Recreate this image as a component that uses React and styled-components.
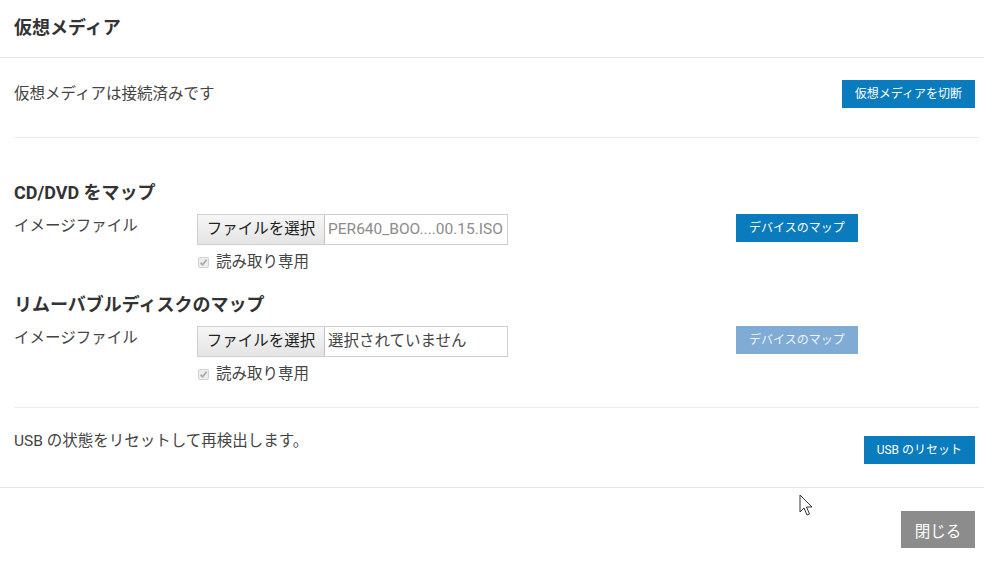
import React from "react";
import styled, { createGlobalStyle } from "styled-components";

const Global = createGlobalStyle`
  html, body { margin: 0; padding: 0; background: #fff; }
  body {
    font-family: "Roboto", "Noto Sans CJK JP", sans-serif;
    color: #444;
    -webkit-font-smoothing: antialiased;
  }
`;

const Modal = styled.div`
  position: relative;
  width: 984px;
  height: 567px;
  background: #fff;
`;

const Header = styled.div`
  display: flex;
  align-items: center;
  padding: 0 14px 1px;
  box-sizing: border-box;
  border-bottom: 1px solid #e6e6e6;
  height: 58px;
`;

const Title = styled.h1`
  margin: 0;
  font-size: 18px;
  font-weight: 700;
  color: #333;
  line-height: 24px;
`;

const Body = styled.div`
  padding: 0 5px 0 14px;
`;

const Row = styled.div`
  display: flex;
  justify-content: space-between;
  align-items: ${(p) => (p.$top ? "flex-start" : "center")};
  padding: ${(p) => p.$pad};
  padding-right: 4px;
  border-bottom: ${(p) => (p.$noBorder ? "none" : "1px solid #ebebeb")};
`;

const Text = styled.div`
  font-size: 15.5px;
  line-height: 20px;
  color: #444;
`;

const PrimaryButton = styled.button`
  height: 28px;
  padding: 0 13px;
  border: none;
  border-radius: 0;
  background: ${(p) => (p.disabled ? "#7fabd5" : "#0a7bbc")};
  color: ${(p) => (p.disabled ? "#eef4fa" : "#fff")};
  font-family: inherit;
  font-size: 12px;
  line-height: 28px;
  white-space: nowrap;
  margin-top: ${(p) => p.$mt || "0"};
  cursor: pointer;
`;

const Section = styled.div`
  margin-top: ${(p) => p.$mt};
`;

const SectionTitle = styled.h2`
  margin: 0;
  font-size: 18px;
  font-weight: 700;
  line-height: 26px;
  color: #333;
`;

const FieldGrid = styled.div`
  display: grid;
  grid-template-columns: 183px 539px auto;
  margin-top: 8px;
`;

const Label = styled.div`
  font-size: 15.5px;
  line-height: 20px;
  padding-top: 2px;
  color: #444;
`;

const FileBox = styled.div`
  display: flex;
  align-items: stretch;
  width: 311px;
  height: 31px;
  box-sizing: border-box;
  border: 1px solid #cfcfcf;
`;

const FileButton = styled.div`
  width: 127px;
  box-sizing: border-box;
  background: linear-gradient(#f6f6f6, #e4e4e4);
  border-right: 1px solid #c4c4c4;
  font-size: 15.5px;
  line-height: 29px;
  color: #222;
  text-align: center;
`;

const FileName = styled.div`
  flex: 1;
  padding-left: 3px;
  font-size: 15.5px;
  line-height: 29px;
  white-space: nowrap;
  overflow: hidden;
  color: ${(p) => (p.$muted ? "#8c8c8c" : "#444")};
`;

const CheckRow = styled.div`
  display: flex;
  align-items: center;
  margin-top: 7px;
  font-size: 15.5px;
  line-height: 20px;
  color: #444;
`;

const CheckBox = styled.span`
  width: 11px;
  height: 11px;
  margin-left: 1px;
  margin-right: 7px;
  box-sizing: border-box;
  border: 1px solid #d2d2d2;
  border-radius: 2px;
  background: #eeeeee;
  display: inline-flex;
  align-items: center;
  justify-content: center;
`;

const Divided = styled.div`
  padding-bottom: 23px;
  border-bottom: 1px solid #ebebeb;
`;

const Footer = styled.div`
  border-top: 1px solid #e6e6e6;
  display: flex;
  justify-content: flex-end;
  padding: 23px 9px 0 0;
`;

const CloseButton = styled.button`
  width: 74px;
  height: 37px;
  border: none;
  border-radius: 0;
  background: #8c8c8c;
  color: #fff;
  font-family: inherit;
  font-size: 15.5px;
  cursor: pointer;
`;

const Cursor = styled.svg`
  position: absolute;
  left: 799px;
  top: 494px;
`;

function ReadOnly() {
  return (
    <CheckRow>
      <CheckBox>
        <svg width="9" height="9" viewBox="0 0 9 9">
          <path d="M1.5 4.8 L3.6 6.8 L7.6 1.8" fill="none" stroke="#a6a6a6" strokeWidth="1.6" />
        </svg>
      </CheckBox>
      読み取り専用
    </CheckRow>
  );
}

function MapSection({ title, file, muted, disabled, mt }) {
  return (
    <Section $mt={mt}>
      <SectionTitle>{title}</SectionTitle>
      <FieldGrid>
        <Label>イメージファイル</Label>
        <div>
          <FileBox>
            <FileButton>ファイルを選択</FileButton>
            <FileName $muted={muted}>{file}</FileName>
          </FileBox>
          <ReadOnly />
        </div>
        <div>
          <PrimaryButton disabled={disabled}>デバイスのマップ</PrimaryButton>
        </div>
      </FieldGrid>
    </Section>
  );
}

export default function App() {
  return (
    <>
      <Global />
      <Modal>
        <Header>
          <Title>仮想メディア</Title>
        </Header>
        <Body>
          <Row $pad="22px 0 29px">
            <Text>仮想メディアは接続済みです</Text>
            <PrimaryButton>仮想メディアを切断</PrimaryButton>
          </Row>
          <MapSection mt="42px" title="CD/DVD をマップ" file="PER640_BOO....00.15.ISO" muted />
          <Divided>
            <MapSection mt="20px" title="リムーバブルディスクのマップ" file="選択されていません" disabled />
          </Divided>
          <Row $top $noBorder $pad="23px 0 23px">
            <Text>USB の状態をリセットして再検出します。</Text>
            <PrimaryButton $mt="5px">USB のリセット</PrimaryButton>
          </Row>
        </Body>
        <Footer>
          <CloseButton>閉じる</CloseButton>
        </Footer>
        <Cursor width="16" height="24" viewBox="0 0 16 24">
          <path d="M1 1 L1 18 L5 14 L8 21 L10.5 20 L7.5 13 L13 13 Z" fill="#fff" stroke="#333" strokeWidth="1" strokeLinejoin="round" />
        </Cursor>
      </Modal>
    </>
  );
}
